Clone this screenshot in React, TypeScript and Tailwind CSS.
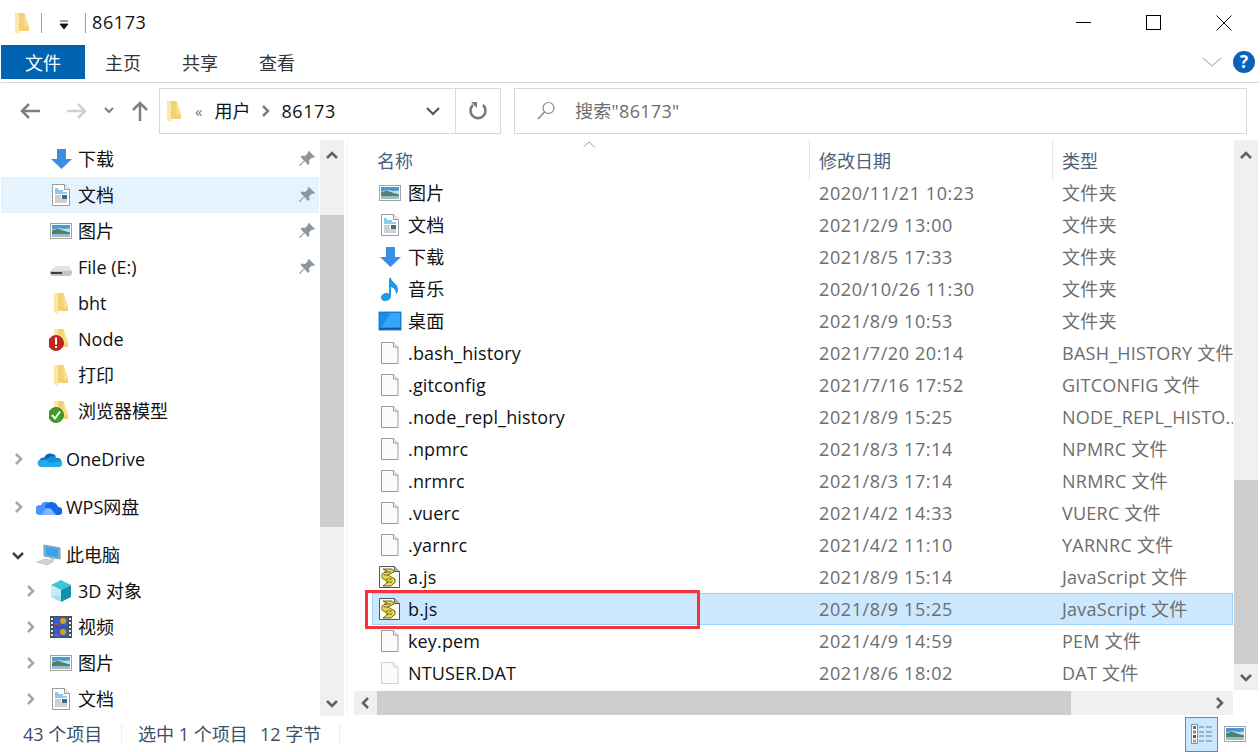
import type { ReactNode } from "react";

function Folder({ badge }: { badge?: "error" | "ok" }) {
  return (
    <svg width="24" height="24" viewBox="0 0 24 24">
      <path d="M5 2h9.500l4.500 14v4H9v3l-4-2z" fill="#f3d277" />
      <path d="M5 2h4v21l-4-2z" fill="#fde7a6" />
      <path d="M14.500 2v14h4.500z" fill="#fbe08f" />
      {badge === "error" && (
        <g>
          <circle cx="7" cy="16" r="7.500" fill="#c4281c" stroke="#8f1a12" strokeWidth="0.8" />
          <rect x="6" y="10.500" width="2" height="7" fill="#fff" />
          <rect x="6" y="19" width="2" height="2" fill="#fff" />
        </g>
      )}
      {badge === "ok" && (
        <g>
          <circle cx="7" cy="16" r="7.500" fill="#3f9e24" stroke="#2c7a16" strokeWidth="0.8" />
          <path d="M3 16l3 3.500 5-7" fill="none" stroke="#fff" strokeWidth="2" />
        </g>
      )}
    </svg>
  );
}

function Download() {
  return (
    <svg width="24" height="24" viewBox="0 0 24 24">
      <path d="M8 2h9v10h6L12.500 22 2 12h6z" fill="#3a8fe2" />
    </svg>
  );
}

function Doc() {
  return (
    <svg width="24" height="24" viewBox="0 0 24 24">
      <path d="M3.500 1.500h12l5 5v16h-17z" fill="#fff" stroke="#9b9b9b" />
      <path d="M15.500 1.500v5h5" fill="#eee" stroke="#9b9b9b" />
      <path d="M6 6h3M6 8h8M6 10h12" stroke="#1f93ea" strokeWidth="1.100" />
      <path d="M6 13h6M6 15h6M6 17h12M6 19h12" stroke="#a0a0a0" />
      <rect x="13" y="12" width="5" height="4" fill="#3d6f8c" />
    </svg>
  );
}

function Picture() {
  return (
    <svg width="24" height="24" viewBox="0 0 24 24">
      <rect x="1.500" y="4.500" width="21" height="15" fill="#fff" stroke="#a3a3a3" />
      <rect x="3" y="6" width="18" height="12" fill="#bcdcef" />
      <path d="M3 6h18v3.500l-6 .5-5-1-7 1.500z" fill="#4a9ad2" />
      <path d="M3 11.500l6-2 5 2 7 2V16H3z" fill="#4e8074" />
      <path d="M3 15h18v3H3z" fill="#9fbcc4" />
    </svg>
  );
}

function Drive() {
  return (
    <svg width="24" height="24" viewBox="0 0 24 24">
      <path d="M7 11h13l3 5H1z" fill="#e3e3e3" />
      <path d="M1 16h22v3l-2 2H3l-2-2z" fill="#c4c4c4" />
      <path d="M2 17h11v2H2z" fill="#3c3c3c" />
    </svg>
  );
}

function OneDrive() {
  return (
    <svg width="26" height="24" viewBox="0 0 26 24">
      <path d="M8 11a7 7 0 0 1 12-2l-6 7-7-3z" fill="#0a64b8" />
      <path d="M4 12a6 6 0 0 1 6-1l6 4-7 4H4z" fill="#0f78d4" />
      <path d="M14 9.500a6 6 0 0 1 6.500 1.500 4 4 0 0 1 5 4l-8 3-8-5z" fill="#1490df" />
      <path d="M10 13l5 3 10.500-1.500A3.500 3.500 0 0 1 22 20H5a4 4 0 0 1-2-7z" fill="#28a8ea" />
    </svg>
  );
}

function WpsCloud() {
  return (
    <svg width="26" height="24" viewBox="0 0 26 24">
      <path d="M3 20a5 5 0 0 1 2-10 6 6 0 0 1 7-3l3 13z" fill="#4c95ff" />
      <path d="M9 11a7 7 0 0 1 13 1 4 4 0 0 1 1 8H12z" fill="#1768e8" />
      <path d="M6 20c3-8 7-9 11-4l3 4z" fill="#7fb6ff" />
    </svg>
  );
}

function ThisPc() {
  return (
    <svg width="26" height="24" viewBox="0 0 26 24">
      <path d="M8 2l16 3v11L8 13z" fill="#5cb8ec" stroke="#8a9aa6" />
      <path d="M10 4l12 2v8L10 12z" fill="#39a3e6" />
      <path d="M1 19l8-3 9 2-7 4z" fill="#d0d4d8" stroke="#a9afb5" strokeWidth="0.6" />
      <path d="M14 14l4 1v2l-4-1z" fill="#b5bcc2" />
    </svg>
  );
}

function Cube() {
  return (
    <svg width="24" height="24" viewBox="0 0 24 24">
      <path d="M12 1l10 5-10 5L2 6z" fill="#3fc4dc" />
      <path d="M2 6l10 5v12L2 18z" fill="#c2eef3" />
      <path d="M22 6l-10 5v12l10-5z" fill="#0f92ae" />
      <path d="M2 18l5-2 5 2v5z" fill="#8adbe6" opacity="0.6" />
    </svg>
  );
}

function Film() {
  return (
    <svg width="24" height="24" viewBox="0 0 24 24">
      <rect x="1" y="1" width="22" height="22" fill="#4a4f55" />
      <rect x="5" y="2" width="14" height="9.500" fill="#2f5fc4" />
      <rect x="5" y="12.500" width="14" height="9.500" fill="#2f5fc4" />
      <circle cx="14" cy="6" r="3" fill="#d7a021" />
      <circle cx="14" cy="17" r="3" fill="#d7a021" />
      <rect x="6" y="8" width="4" height="2" fill="#d13b55" />
      <rect x="6" y="19" width="4" height="2" fill="#d13b55" />
      <path d="M2 3h2v2H2zM2 7h2v2H2zM2 11h2v2H2zM2 15h2v2H2zM2 19h2v2H2zM20 3h2v2h-2zM20 7h2v2h-2zM20 11h2v2h-2zM20 15h2v2h-2zM20 19h2v2h-2z" fill="#e6e6e6" />
    </svg>
  );
}

function Music() {
  return (
    <svg width="24" height="24" viewBox="0 0 24 24">
      <path d="M11 1h2c0 4 7 5 7 12 0 2-1 3-2 4 0-4-2-6-5-7v9c0 3-3 5-6 5-3 0-4-2-4-3.500C3 18 6 16 9 16c1 0 2 0 2 1z" fill="#1a9ae8" />
    </svg>
  );
}

function Desktop() {
  return (
    <svg width="24" height="24" viewBox="0 0 24 24">
      <rect x="1" y="3" width="22" height="18" fill="#1590ea" stroke="#0b6ab4" strokeWidth="0.8" />
      <path d="M12 4h10v14H4z" fill="#34a8f5" />
      <rect x="1.500" y="19" width="21" height="1.500" fill="#0b5ea6" />
    </svg>
  );
}

function Blank({ faded }: { faded?: boolean }) {
  const line = faded ? "#cfcfcf" : "#9a9a9a";
  return (
    <svg width="24" height="24" viewBox="0 0 24 24">
      <path d="M3.500 1.500h12l4.500 4.500v16.500H3.500z" fill="#fbfbfc" stroke={line} />
      <path d="M15.500 1.500v4.500h4.500" fill="#f0f0f0" stroke={line} />
    </svg>
  );
}

function JsFile() {
  return (
    <svg width="24" height="24" viewBox="0 0 24 24">
      <path d="M1.500 1.500h15l5 5v16h-20z" fill="#fdfdf6" stroke="#555" />
      <path d="M16.500 1.500v5h5" fill="#bbb" stroke="#555" />
      <path d="M5 4h9l2 3-6 3 7 4v3l-4 4H5l5-4-6-4V9l5-3z" fill="#e8dc45" stroke="#5e5b20" strokeWidth="0.9" />
      <path d="M6 7h7M6 10h5M8 14h6M8 17h6" stroke="#5e5b20" strokeWidth="0.9" />
    </svg>
  );
}

function Pin() {
  return (
    <svg width="16" height="16" viewBox="0 0 16 16">
      <path d="M10 0l6 6-2 1-1-.5-3 3 .5 3-1.500 1.500L5.500 10 1 15l-1-1 5-4.500L1.500 6 3 4.500l3 .5 3-3L8.500 1z" fill="#8e979f" />
    </svg>
  );
}

function Chev({ dir, className = "" }: { dir: "up" | "down" | "left" | "right"; className?: string }) {
  const d = {
    up: "M2 9l5-5 5 5",
    down: "M2 5l5 5 5-5",
    left: "M9 2L4 7l5 5",
    right: "M5 2l5 5-5 5",
  }[dir];
  return (
    <svg width="14" height="14" viewBox="0 0 14 14" className={className}>
      <path d={d} fill="none" stroke="currentColor" strokeWidth="2.500" />
    </svg>
  );
}

function NavArrow({ dir, className = "" }: { dir: "left" | "right" | "up"; className?: string }) {
  const d = {
    left: "M21 11H3M10 4l-7 7 7 7",
    right: "M1 11h18M12 4l7 7-7 7",
    up: "M11 21V3M4 10l7-7 7 7",
  }[dir];
  return (
    <svg width="22" height="22" viewBox="0 0 22 22" className={className}>
      <path d={d} fill="none" stroke="currentColor" strokeWidth="2.500" />
    </svg>
  );
}

function NavRow({
  depth,
  icon,
  label,
  chevron,
  pinned,
  selected,
  className = "",
}: {
  depth: 0 | 1;
  icon: ReactNode;
  label: string;
  chevron?: "right" | "down";
  pinned?: boolean;
  selected?: boolean;
  className?: string;
}) {
  return (
    <div
      className={`flex h-[36px] items-center ${depth === 0 ? "pl-[11px]" : selected ? "pl-[22px]" : "pl-[23px]"} ${selected ? "mx-px bg-[#e5f3ff]" : ""} ${className}`}
    >
      <div className={`flex w-[14px] justify-center ${chevron === "down" ? "text-[#404040]" : "text-[#a6a6a6]"}`}>
        {chevron && <Chev dir={chevron} />}
      </div>
      <div className="ml-[11px] flex w-[26px] justify-center">{icon}</div>
      <div className="ml-[4px] flex-1 whitespace-nowrap text-[#111]">{label}</div>
      {pinned && (
        <div className={selected ? "mr-[4px]" : "mr-[5px]"}>
          <Pin />
        </div>
      )}
    </div>
  );
}

const files: { icon: ReactNode; name: string; date: string; type: string }[] = [
  { icon: <Picture />, name: "图片", date: "2020/11/21 10:23", type: "文件夹" },
  { icon: <Doc />, name: "文档", date: "2021/2/9 13:00", type: "文件夹" },
  { icon: <Download />, name: "下载", date: "2021/8/5 17:33", type: "文件夹" },
  { icon: <Music />, name: "音乐", date: "2020/10/26 11:30", type: "文件夹" },
  { icon: <Desktop />, name: "桌面", date: "2021/8/9 10:53", type: "文件夹" },
  { icon: <Blank />, name: ".bash_history", date: "2021/7/20 20:14", type: "BASH_HISTORY 文件" },
  { icon: <Blank />, name: ".gitconfig", date: "2021/7/16 17:52", type: "GITCONFIG 文件" },
  { icon: <Blank />, name: ".node_repl_history", date: "2021/8/9 15:25", type: "NODE_REPL_HISTO..." },
  { icon: <Blank />, name: ".npmrc", date: "2021/8/3 17:14", type: "NPMRC 文件" },
  { icon: <Blank />, name: ".nrmrc", date: "2021/8/3 17:14", type: "NRMRC 文件" },
  { icon: <Blank />, name: ".vuerc", date: "2021/4/2 14:33", type: "VUERC 文件" },
  { icon: <Blank />, name: ".yarnrc", date: "2021/4/2 11:10", type: "YARNRC 文件" },
  { icon: <JsFile />, name: "a.js", date: "2021/8/9 15:14", type: "JavaScript 文件" },
  { icon: <JsFile />, name: "b.js", date: "2021/8/9 15:25", type: "JavaScript 文件" },
  { icon: <Blank />, name: "key.pem", date: "2021/4/9 14:59", type: "PEM 文件" },
  { icon: <Blank faded />, name: "NTUSER.DAT", date: "2021/8/6 18:02", type: "DAT 文件" },
];

export default function App() {
  return (
    <div className="flex h-[752px] w-[1260px] flex-col overflow-hidden bg-white font-['Open_Sans','Noto_Sans_CJK_SC',sans-serif] text-[18px] leading-[24px]">
      {/* Title bar */}
      <div className="flex h-[45px] items-center">
        <div className="ml-[10px] flex w-[24px] justify-center">
          <Folder />
        </div>
        <div className="ml-[7px] h-[20px] w-px bg-[#a0a0a0]" />
        <svg width="10" height="10" viewBox="0 0 10 10" className="ml-[17px] mt-[4px]">
          <path d="M1 1h8M1 4h8L5 9z" fill="#111" stroke="#111" strokeWidth="0.8" />
        </svg>
        <div className="ml-[16px] h-[20px] w-px bg-[#a0a0a0]" />
        <div className="ml-[6px] -mt-[2px] tracking-[0.6px] text-[#111]">86173</div>
        <div className="ml-auto flex items-center">
          <div className="flex w-[70px] justify-center">
            <div className="h-px w-[15px] bg-black" />
          </div>
          <div className="flex w-[70px] justify-center">
            <div className="h-[15px] w-[15px] border border-black" />
          </div>
          <div className="flex w-[72px] justify-center">
            <svg width="16" height="16" viewBox="0 0 16 16">
              <path d="M.5.5l15 15M15.500.5l-15 15" stroke="#111" />
            </svg>
          </div>
        </div>
      </div>

      {/* Ribbon tabs */}
      <div className="mx-px flex h-[38px] border-b border-[#d9d9d9] pb-[3px]">
        <div className="flex h-[34px] w-[84px] items-center justify-center bg-[#0063b1] pt-[2px] text-white">文件</div>
        <div className="ml-[20px] flex items-center pt-[2px] text-[#333]">主页</div>
        <div className="ml-[41px] flex items-center pt-[2px] text-[#333]">共享</div>
        <div className="ml-[41px] flex items-center pt-[2px] text-[#333]">查看</div>
        <div className="ml-auto flex items-center">
          <svg width="22" height="12" viewBox="0 0 22 12">
            <path d="M2 2l9 8 9-8" fill="none" stroke="#c4c4c4" strokeWidth="1.500" />
          </svg>
          <div className="ml-[10px] mr-[4px] flex h-[22px] w-[22px] items-center justify-center rounded-full bg-[#0a62bb] text-[17px] font-bold text-white">
            ?
          </div>
        </div>
      </div>

      {/* Address row */}
      <div className="flex h-[57px] pt-[5px]">
        <div className="flex h-[46px] w-[159px] items-center">
          <NavArrow dir="left" className="ml-[19px] text-[#7f7f7f]" />
          <NavArrow dir="right" className="ml-[25px] text-[#d0d0d0]" />
          <svg width="12" height="8" viewBox="0 0 12 8" className="ml-[15px] text-[#7f7f7f]">
            <path d="M2 1l4 4 4-4" fill="none" stroke="currentColor" strokeWidth="2" />
          </svg>
          <NavArrow dir="up" className="ml-[14px] text-[#7f7f7f]" />
        </div>
        <div className="flex h-[46px] w-[342px] items-center border border-[#d9d9d9]">
          <div className="ml-[2px] flex w-[24px] justify-center">
            <Folder />
          </div>
          <div className="ml-[9px] text-[15px] text-[#777]">«</div>
          <div className="ml-[12px] text-[#111]">用户</div>
          <Chev dir="right" className="ml-[8px] text-[#7f7f7f]" />
          <div className="ml-[9px] tracking-[0.6px] text-[#111]">86173</div>
          <svg width="16" height="10" viewBox="0 0 16 10" className="ml-auto mr-[59px] text-[#555]">
            <path d="M2 2l6 6 6-6" fill="none" stroke="currentColor" strokeWidth="2" />
          </svg>
        </div>
        <div className="-ml-[46px] flex h-[46px] w-[46px] items-center justify-center border-x border-[#d9d9d9]">
          <svg width="20" height="20" viewBox="0 0 20 20" className="text-[#7a7a7a]">
            <path d="M5 4a7.500 7.500 0 1 0 10 0" fill="none" stroke="currentColor" strokeWidth="2.600" />
            <path d="M3 1h6v6z" fill="currentColor" />
          </svg>
        </div>
        <div className="ml-[13px] flex h-[46px] w-[733px] items-center border border-[#d9d9d9]">
          <svg width="20" height="20" viewBox="0 0 20 20" className="ml-[21px]">
            <circle cx="12.500" cy="7" r="5.500" fill="none" stroke="#7e8a95" strokeWidth="1.200" />
            <path d="M8.500 11L2 18" stroke="#7e8a95" strokeWidth="1.400" />
          </svg>
          <div className="ml-[19px] tracking-[0.3px] text-[#6d6d6d]">搜索"86173"</div>
        </div>
      </div>

      {/* Main area */}
      <div className="flex h-[576px]">
        {/* Navigation pane */}
        <div className="w-[320px] pt-px">
          <NavRow depth={1} icon={<Download />} label="下载" pinned />
          <NavRow depth={1} icon={<Doc />} label="文档" pinned selected />
          <NavRow depth={1} icon={<Picture />} label="图片" pinned />
          <NavRow depth={1} icon={<Drive />} label="File (E:)" pinned />
          <NavRow depth={1} icon={<Folder />} label="bht" />
          <NavRow depth={1} icon={<Folder badge="error" />} label="Node" />
          <NavRow depth={1} icon={<Folder />} label="打印" />
          <NavRow depth={1} icon={<Folder badge="ok" />} label="浏览器模型" />
          <NavRow depth={0} icon={<OneDrive />} label="OneDrive" chevron="right" className="mt-[12px]" />
          <NavRow depth={0} icon={<WpsCloud />} label="WPS网盘" chevron="right" className="mt-[12px]" />
          <NavRow depth={0} icon={<ThisPc />} label="此电脑" chevron="down" className="mt-[12px]" />
          <NavRow depth={1} icon={<Cube />} label="3D 对象" chevron="right" />
          <NavRow depth={1} icon={<Film />} label="视频" chevron="right" />
          <NavRow depth={1} icon={<Picture />} label="图片" chevron="right" />
          <NavRow depth={1} icon={<Doc />} label="文档" chevron="right" />
        </div>
        <div className="flex h-[576px] w-[24px] flex-col bg-[#f0f0f0] text-[#606060]">
          <div className="flex h-[75px] justify-center pt-[9px]">
            <Chev dir="up" />
          </div>
          <div className="h-[312px] bg-[#cdcdcd]" />
          <div className="flex flex-1 items-end justify-center pb-[6px]">
            <Chev dir="down" />
          </div>
        </div>
        <div className="ml-[3px] mr-[6px] w-px bg-[#f2f2f2]" />

        {/* File list */}
        <div className="flex w-[906px] flex-col">
          <div className="flex h-[550px]">
            <div className="w-[880px] pl-[18px]">
              <div className="flex h-[37px] items-start text-[#4c607a]">
                <div className="relative flex h-[37px] w-[437px] items-center pl-[5px] pt-[5px]">
                  名称
                  <svg width="12" height="7" viewBox="0 0 12 7" className="absolute left-[211px] top-[1px]">
                    <path d="M.5 6L6 1l5.500 5" fill="none" stroke="#a0a0a0" />
                  </svg>
                </div>
                <div className="flex h-[40px] w-[243px] items-center border-l border-[#e5e5e5] pl-[9px] pt-[2px]">修改日期</div>
                <div className="flex h-[40px] items-center border-l border-[#e5e5e5] pl-[9px] pt-[2px]">类型</div>
              </div>
              {files.map((f) => {
                const selected = f.name === "b.js";
                return (
                  <div
                    key={f.name}
                    className={`relative flex h-[32px] w-[861px] items-center ${selected ? "bg-[#cce8ff] outline outline-1 -outline-offset-1 outline-[#99d1ff]" : ""}`}
                  >
                    <div className="flex w-[437px] items-center pl-[6px]">
                      {f.icon}
                      <div className="ml-[6px] tracking-[0.15px] text-[#111]">{f.name}</div>
                    </div>
                    <div className="w-[243px] pl-[10px] tracking-[0.6px] text-[#6d6d6d]">{f.date}</div>
                    <div className="w-[181px] overflow-hidden whitespace-nowrap pl-[10px] tracking-[0.25px] text-[#6d6d6d]">{f.type}</div>
                    {selected && (
                      <div className="absolute left-[-7px] top-[-3px] h-[39px] w-[335px] border-[3px] border-[#f4333a]" />
                    )}
                  </div>
                );
              })}
            </div>
            <div className="flex w-[24px] flex-col bg-[#f0f0f0] text-[#606060]">
              <div className="flex h-[340px] justify-center pt-[9px]">
                <Chev dir="up" />
              </div>
              <div className="h-[184px] bg-[#cdcdcd]" />
              <div className="flex flex-1 items-center justify-center">
                <Chev dir="down" />
              </div>
            </div>
          </div>
          <div className="mt-px flex h-[24px] w-[879px] items-center bg-[#f0f0f0] text-[#606060]">
            <div className="flex w-[23px] justify-center">
              <Chev dir="left" />
            </div>
            <div className="h-[24px] w-[694px] bg-[#cdcdcd]" />
            <div className="flex flex-1 justify-end pr-[7px]">
              <Chev dir="right" />
            </div>
          </div>
        </div>
      </div>

      {/* Status bar */}
      <div className="flex h-[36px] items-center text-[#39506b]">
        <div className="ml-[23px] w-[98px]">43 个项目</div>
        <div className="h-[20px] w-px bg-[#eeeeee]" />
        <div className="ml-[16px] w-[122px]">选中 1 个项目</div>
        <div className="w-[79px]">12 字节</div>
        <div className="h-[20px] w-px bg-[#eeeeee]" />
        <div className="ml-auto flex h-[35px] w-[33px] items-center justify-center border border-[#26a0da] bg-[#cce8ff]">
          <svg width="22" height="20" viewBox="0 0 22 20">
            <rect x="0.500" y="0.500" width="6" height="19" fill="#fff" stroke="#8f8f8f" />
            <rect x="2" y="2" width="3" height="3" fill="#3b78b0" />
            <rect x="2" y="6.500" width="3" height="3" fill="#a08a58" />
            <rect x="2" y="11" width="3" height="3" fill="#c42b2b" />
            <rect x="2" y="15.500" width="3" height="3" fill="#8fae5c" />
            <path d="M8 3h5M15 3h6M8 8h5M15 8h6M8 12h5M15 12h6M8 17h5M15 17h6" stroke="#6f7d8a" strokeWidth="1.200" />
          </svg>
        </div>
        <div className="ml-[5px] mr-[13px]">
          <Picture />
        </div>
      </div>
    </div>
  );
}
